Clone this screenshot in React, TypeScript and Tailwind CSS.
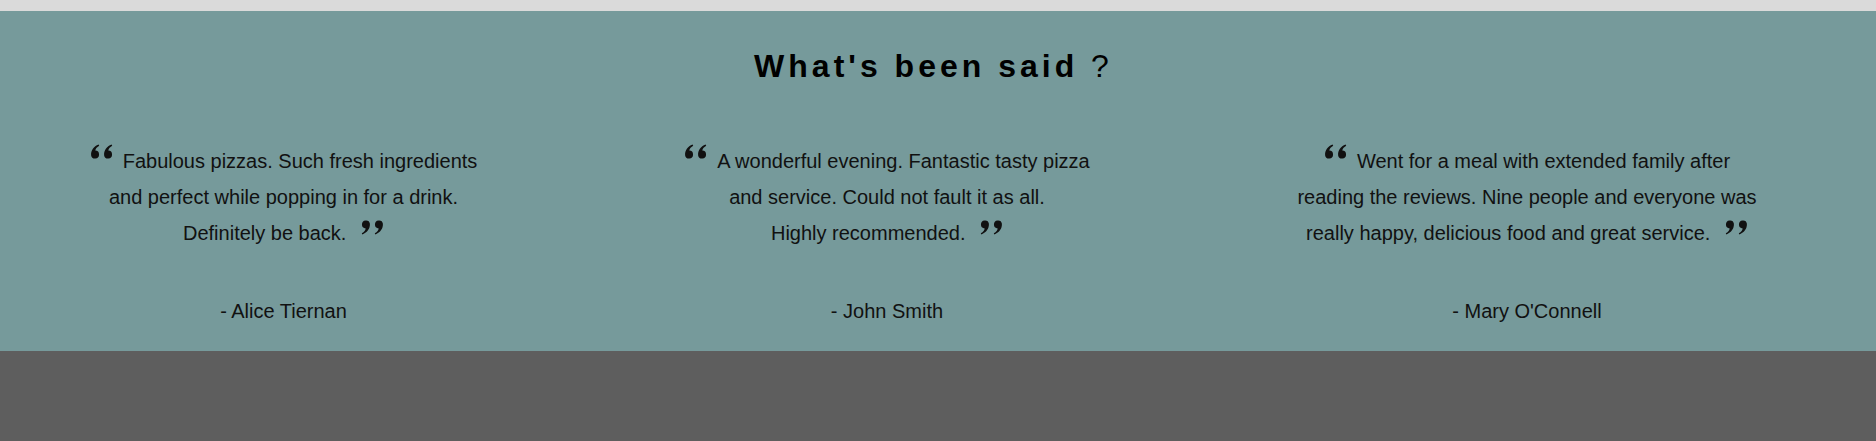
import React from "react";

interface Review {
    lines: string[];
    author: string;
    width: string;
}

const reviews: Review[] = [
    {
        lines: [
            "Fabulous pizzas. Such fresh ingredients",
            "and perfect while popping in for a drink.",
            "Definitely be back.",
        ],
        author: "- Alice Tiernan",
        width: "w-[567px]",
    },
    {
        lines: [
            "A wonderful evening. Fantastic tasty pizza",
            "and service. Could not fault it as all.",
            "Highly recommended.",
        ],
        author: "- John Smith",
        width: "w-[640px]",
    },
    {
        lines: [
            "Went for a meal with extended family after",
            "reading the reviews. Nine people and everyone was",
            "really happy, delicious food and great service.",
        ],
        author: "- Mary O'Connell",
        width: "w-[640px]",
    },
];

// one "6" shaped comma, the closing mark is the same drawing turned round
const Comma = ({ x }: { x: number }) => (
    <path
        transform={`translate(${x} 0)`}
        d="M1.1 11.2 C0.9 6.4 3.6 2.6 8.6 0.6 L9.2 1.8 C6.6 3.3 5.6 5 5.3 6.6 A4 4 0 1 1 1.1 11.2 Z"
    />
);

const QuoteMark = ({ close }: { close?: boolean }) => (
    <svg
        width="24"
        height="16"
        viewBox="0 0 24 16"
        fill="#111"
        className={
            close
                ? "inline-block rotate-180 ml-[8px] align-[5px]"
                : "inline-block mr-[9px] align-[8px]"
        }
    >
        <Comma x={0} />
        <Comma x={13} />
    </svg>
);

const App = () => {
    return (
        <div className="min-h-screen bg-[#5e5e5e] font-['Liberation_Sans',Arial,sans-serif] text-[#111]">
            <div className="h-[11px] bg-[#dadada]" />
            <section className="bg-[#769a9b] pt-[39px] h-[340px]">
                <h2 className="text-center text-[32px] leading-[32px] font-bold tracking-[4px] text-black pr-[9px]">
                    What's been said <span className="font-normal">?</span>
                </h2>
                <div className="flex mt-[61px]">
                    {reviews.map((review) => (
                        <div key={review.author} className={`${review.width} text-center`}>
                            <p className="text-[20px] leading-[36px]">
                                <QuoteMark />
                                {review.lines[0]}
                                <br />
                                {review.lines[1]}
                                <br />
                                {review.lines[2]} <QuoteMark close />
                            </p>
                            <p className="text-[20px] leading-[36px] mt-[42px]">{review.author}</p>
                        </div>
                    ))}
                </div>
            </section>
        </div>
    );
};

export default App;
